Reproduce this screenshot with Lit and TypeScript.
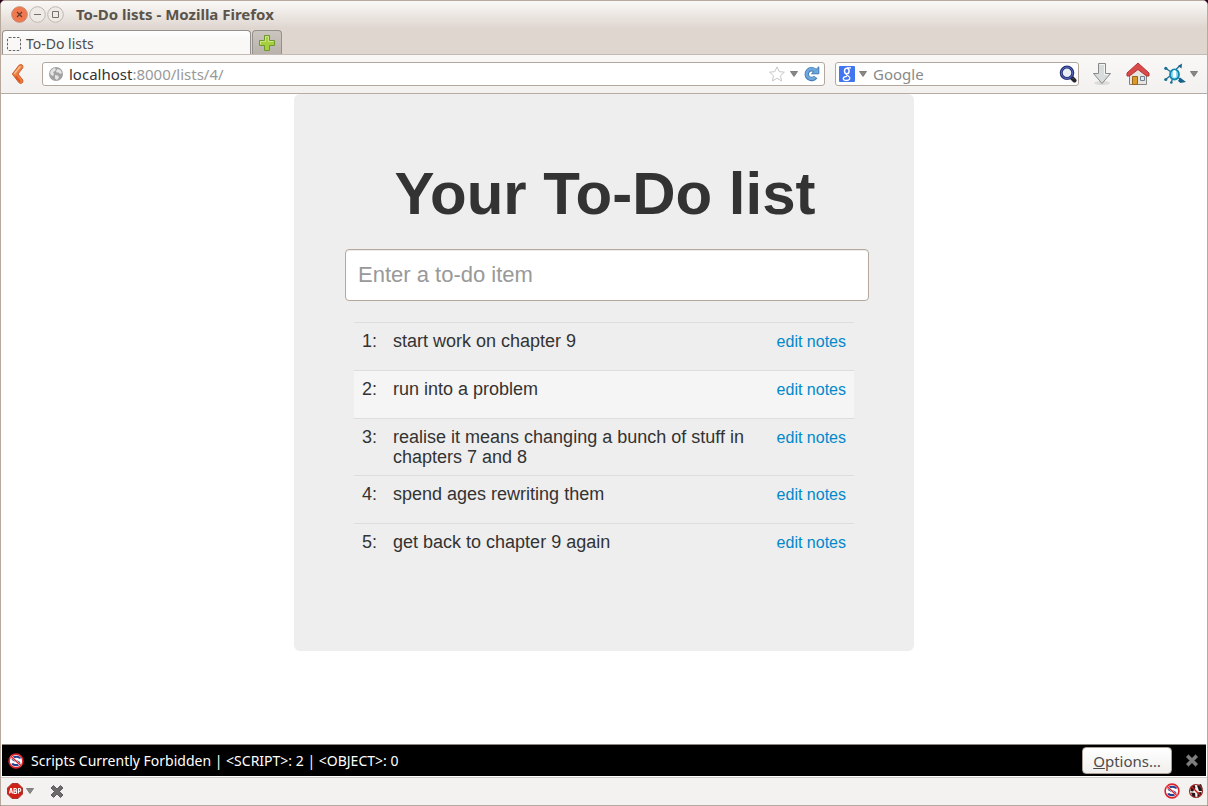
import { LitElement, html, css, svg } from "lit";
import { customElement, state } from "lit/decorators.js";

interface TodoItem {
  id: number;
  text: string;
}

const caret = html`<svg class="caret" width="8" height="6" viewBox="0 0 8 6" aria-hidden="true">
  <path d="M.5.5h7L4 5.5z" fill="#8a8885" stroke="#6f6d6a" stroke-width=".8" />
</svg>`;

const crossPath = svg`<path d="M3.500 1.500 7 5l3.500-3.500 2.500 2.500L9.500 7.500l3.500 3.500-2.500 2.500L7 10l-3.500 3.500L1 11l3.500-3.500L1 4z" />`;

const scriptBlocked = html`<svg width="16" height="16" viewBox="0 0 16 16" aria-hidden="true">
  <circle cx="8" cy="8" r="6.900" fill="#fff" stroke="#dd2229" stroke-width="1.600" />
  <path d="M12 5.600C11.500 3.200 4.600 3 4.600 5.800c0 2.500 6.800 1.800 6.800 4.500 0 2.500-6.400 2.300-7.200 0" fill="none" stroke="#27408e" stroke-width="2.100" />
  <path d="m3 3.200 10 9.600" stroke="#fff" stroke-width="2.200" />
  <path d="m3 3.200 10 9.600" stroke="#dd2229" stroke-width="1.400" />
</svg>`;

@customElement("todo-page")
class TodoPage extends LitElement {
  static styles = css`
    :host {
      display: block;
      font-family: "Liberation Sans", Arial, Helvetica, sans-serif;
      color: #333;
    }
    .hero {
      box-sizing: border-box;
      max-width: 620px;
      margin: 0 auto;
      padding: 60px 60px 79px;
      background: #eee;
      border-radius: 6px;
    }
    h1 {
      margin: 0 -40px;
      padding-left: 2px;
      font-size: 60px;
      line-height: 80px;
      font-weight: 700;
      text-align: center;
    }
    form {
      margin: 15px -15px 21px -9px;
    }
    .entry {
      box-sizing: border-box;
      display: block;
      width: 100%;
      height: 52px;
      padding: 0 12px;
      border: 1px solid #b5a99e;
      border-radius: 4px;
      background: #fff;
      box-shadow: inset 0 1px 1px rgba(0, 0, 0, 0.08);
      font: 22px "Liberation Sans", Arial, sans-serif;
      color: #555;
    }
    .entry::placeholder {
      color: #999;
      opacity: 1;
    }
    .list {
      width: 100%;
      border-collapse: collapse;
      font-size: 18px;
      line-height: 20px;
    }
    tr {
      height: 48px;
    }
    td {
      padding: 8px;
      border-top: 1px solid #ddd;
      vertical-align: top;
    }
    tr:nth-child(2) {
      background: #f5f5f5;
    }
    .number {
      width: 15px;
    }
    .action {
      width: 69px;
      text-align: right;
      white-space: nowrap;
      font-size: 16px;
      line-height: 22px;
    }
    a {
      color: #08c;
      text-decoration: none;
    }
    a:hover {
      text-decoration: underline;
    }
  `;

  @state() private items: TodoItem[] = [
    { id: 1, text: "start work on chapter 9" },
    { id: 2, text: "run into a problem" },
    { id: 3, text: "realise it means changing a bunch of stuff in chapters 7 and 8" },
    { id: 4, text: "spend ages rewriting them" },
    { id: 5, text: "get back to chapter 9 again" },
  ];

  private add(e: Event) {
    e.preventDefault();
    const box = this.renderRoot.querySelector("input")!;
    const text = box.value.trim();
    if (!text) return;
    this.items = [...this.items, { id: this.items.length + 1, text }];
    box.value = "";
  }

  render() {
    return html`<section class="hero">
      <h1>Your To-Do list</h1>
      <form @submit=${this.add}>
        <input class="entry" aria-label="Enter a to-do item" placeholder="Enter a to-do item" />
      </form>
      <table class="list">
        <tbody>
          ${this.items.map(
            (item) => html`<tr>
              <td class="number">${item.id}:</td>
              <td>${item.text}</td>
              <td class="action"><a href="#item-${item.id}">edit notes</a></td>
            </tr>`
          )}
        </tbody>
      </table>
    </section>`;
  }
}

@customElement("app-root")
class AppRoot extends LitElement {
  static styles = css`
    :host {
      display: block;
      font: 14px/20px "Noto Sans", "Open Sans", sans-serif;
      color: #4c4c4c;
      background: #2c001e;
    }
    .window {
      box-sizing: border-box;
      min-height: 100vh;
      display: flex;
      flex-direction: column;
      border: 1px solid #b7a99d;
      border-radius: 5px 5px 0 0;
      background: #fff;
      overflow: hidden;
    }
    svg {
      display: block;
      flex: none;
    }
    button {
      margin: 0;
      padding: 0;
      border: 0;
      background: none;
      font: inherit;
      color: inherit;
    }
    .frame {
      background: linear-gradient(#faf9f7, #dfd6d0 27px);
    }
    .title {
      box-sizing: border-box;
      display: flex;
      align-items: center;
      height: 28px;
      padding: 0 10px 2px;
    }
    .controls {
      display: flex;
      gap: 1px;
      margin-right: 12px;
    }
    .title-text {
      font-size: 15px;
      font-weight: 700;
      color: #5a544c;
    }
    .tabs {
      box-sizing: border-box;
      display: flex;
      align-items: flex-end;
      gap: 1px;
      height: 26px;
      padding: 0 1px;
      border-bottom: 1px solid #c3bab3;
    }
    .tab {
      box-sizing: border-box;
      display: flex;
      align-items: center;
      gap: 5px;
      width: 249px;
      height: 24px;
      padding: 2px 4px 0;
      border: 1px solid #94908d;
      border-bottom: 0;
      border-radius: 4px 4px 0 0;
      background: linear-gradient(#fff, #f9f8f7 8px);
      text-align: left;
    }
    .new-tab {
      box-sizing: border-box;
      width: 30px;
      height: 24px;
      display: grid;
      place-items: center;
      border: 1px solid #94908d;
      border-bottom: 0;
      border-radius: 4px 4px 0 0;
      background: linear-gradient(#cbc5c0, #b9b2ac);
    }
    .toolbar {
      box-sizing: border-box;
      display: flex;
      align-items: center;
      height: 39px;
      padding: 0 9px;
      background: linear-gradient(#f9f8f6, #f3f1f0);
      border-bottom: 1px solid #b5aca4;
    }
    .field {
      box-sizing: border-box;
      display: flex;
      align-items: center;
      height: 24px;
      border: 1px solid #b3a89d;
      border-radius: 3px;
      background: #fff;
      font-size: 15px;
    }
    .address {
      flex: 1;
      margin-left: 17px;
      padding: 0 4px 0 5px;
      gap: 5px;
    }
    .url {
      flex: 1;
      min-width: 0;
      color: #999;
      white-space: nowrap;
    }
    .host {
      color: #333;
    }
    .search {
      width: 244px;
      margin: 0 12px 0 10px;
      padding: 0 1px 0 3px;
      gap: 4px;
    }
    .query {
      flex: 1;
      min-width: 0;
      margin-left: 2px;
      padding: 0;
      border: 0;
      outline: 0;
      background: none;
      font: inherit;
      color: #333;
    }
    .query::placeholder {
      color: #8a8a8a;
      opacity: 1;
    }
    .tools {
      display: flex;
      align-items: center;
      gap: 12px;
    }
    .tool {
      display: flex;
      align-items: center;
      gap: 3px;
    }
    main {
      flex: 1;
    }
    .notice {
      box-sizing: border-box;
      display: flex;
      align-items: center;
      gap: 7px;
      height: 32px;
      margin: 0 1px;
      padding: 0 7px 0 6px;
      border-top: 1px solid #8c8680;
      background: #000;
      color: #fff;
    }
    .message {
      flex: 1;
    }
    .options {
      box-sizing: border-box;
      width: 90px;
      height: 27px;
      margin-right: 6px;
      border: 1px solid #a99f95;
      border-radius: 4px;
      background: linear-gradient(#fff, #f0efed);
      font-size: 15px;
      color: #4c4c4c;
    }
    .status {
      box-sizing: border-box;
      display: flex;
      align-items: center;
      gap: 8px;
      height: 28px;
      margin-top: 1px;
      padding: 0 3px 1px 6px;
      border-top: 1px solid #cfcac6;
      background: #f4f2f1;
    }
    .spacer {
      flex: 1;
    }
    .dismiss {
      margin-left: 8px;
    }
  `;

  render() {
    return html`<div class="window">
      <header class="frame">
        <div class="title">
          <div class="controls">
            <button aria-label="Close">
              <svg width="17" height="17" viewBox="0 0 17 17">
                <circle cx="8.500" cy="8.500" r="7.800" fill="#f0784f" stroke="#c9866c" />
                <path d="m6 6 5 5m0-5-5 5" stroke="#67392b" stroke-width="1.200" />
              </svg>
            </button>
            <button aria-label="Minimize">
              <svg width="17" height="17" viewBox="0 0 17 17">
                <circle cx="8.500" cy="8.500" r="7.800" fill="#eeeae6" stroke="#bfb7ae" />
                <path d="M5 8.500h7" stroke="#77716a" />
              </svg>
            </button>
            <button aria-label="Maximize">
              <svg width="17" height="17" viewBox="0 0 17 17">
                <circle cx="8.500" cy="8.500" r="7.800" fill="#eeeae6" stroke="#bfb7ae" />
                <path d="M5.500 5.500h6v6h-6z" fill="none" stroke="#77716a" />
              </svg>
            </button>
          </div>
          <span class="title-text">To-Do lists - Mozilla Firefox</span>
        </div>
        <div class="tabs">
          <button class="tab">
            <svg width="14" height="14" viewBox="0 0 14 14" aria-hidden="true">
              <rect x=".500" y=".500" width="13" height="13" rx="1.500" fill="none" stroke="#666" stroke-dasharray="2.500 1.500" />
            </svg>
            To-Do lists
          </button>
          <button class="new-tab" aria-label="Open a new tab">
            <svg width="16" height="16" viewBox="0 0 16 16">
              <path d="M5.500.500h5v5h5v5h-5v5h-5v-5h-5v-5h5z" fill="#a5cf3c" stroke="#6c9a2c" />
              <path d="M1.500 9.500v-3h5v-5h3v5h5" fill="none" stroke="#cfe58a" />
            </svg>
          </button>
        </div>
      </header>

      <nav class="toolbar">
        <button aria-label="Back">
          <svg width="15" height="20" viewBox="0 0 15 20">
            <path d="M9 1.200Q11.500-.300 12.800 1.500v2.300L8 10l4.800 6v2.300q-1.300 2-3.800.500L2.300 10z" fill="#ee7f45" stroke="#cc5f2c" stroke-linejoin="round" />
            <path d="M10.500 2.200 4.300 9.800" stroke="#f8bd8c" stroke-width="1.500" />
            <path d="m5.500 12 4.700 5.800" stroke="#e2521c" stroke-width="1.800" />
          </svg>
        </button>
        <div class="field address">
          <svg width="16" height="16" viewBox="0 0 16 16" aria-hidden="true">
            <circle cx="8" cy="8" r="7" fill="#a2a2a2" />
            <path d="M3 4.500 6 2l2 1-1 2-2 1 1 2-1 2-2-1-1-2zM9.500 3l3 1 1.500 3-2 1-2-2-1 1-1-2zM7 9l3 .500 1 2-2 2.500-2-1.500z" fill="#e5e5e5" />
          </svg>
          <span class="url"><span class="host">localhost</span>:8000/lists/4/</span>
          <svg width="16" height="16" viewBox="0 0 16 16" aria-hidden="true">
            <path d="m8 .900 2.200 4.700 5.200.600-3.900 3.500 1.100 5.200L8 12.300l-4.600 2.600 1.100-5.200L.600 6.200l5.200-.600z" fill="#fff" stroke="#c6c6c6" stroke-linejoin="round" />
          </svg>
          ${caret}
          <svg width="17" height="16" viewBox="0 0 17 16" aria-hidden="true">
            <path d="M11.800 4.400A4.900 4.900 0 1 0 12.600 11" fill="none" stroke="#3d78b5" stroke-width="4.400" />
            <path d="M15.800.800v7H8.500z" fill="#70a7da" stroke="#3d78b5" stroke-linejoin="round" />
            <path d="M12.400 4.800A4.900 4.900 0 1 0 12.200 11.200" fill="none" stroke="#70a7da" stroke-width="2.800" />
          </svg>
        </div>
        <div class="field search">
          <svg width="16" height="16" viewBox="0 0 16 16" aria-hidden="true">
            <rect width="16" height="16" rx="1" fill="#4275f0" />
            <ellipse cx="7.800" cy="5" rx="2.300" ry="2.800" fill="none" stroke="#fff" stroke-width="1.500" />
            <path d="M8 1.800h4M8 7.800c-2 1 .500 1.500 1.700 2.500 2.600 2.200.500 4.200-2.200 4.200-4.500 0-4.300-4 .500-4.100" fill="none" stroke="#fff" stroke-width="1.300" />
          </svg>
          ${caret}
          <input class="query" aria-label="Search with Google" placeholder="Google" />
          <svg width="18" height="18" viewBox="0 0 18 18" aria-hidden="true">
            <path d="m11.500 11.500 4 4" stroke="#26242c" stroke-width="4" stroke-linecap="round" />
            <circle cx="8" cy="7.800" r="5.800" fill="#e9edf5" stroke="#263073" stroke-width="3" />
            <circle cx="8" cy="7.800" r="5.700" fill="none" stroke="#5a6dc2" />
            <path d="m14 13.500 1.500 1.500" stroke="#82808a" stroke-dasharray="1 1" />
          </svg>
        </div>
        <div class="tools">
          <button class="tool" aria-label="Downloads">
            <svg width="22" height="24" viewBox="0 0 22 24">
              <ellipse cx="11" cy="21" rx="8" ry="2" fill="#dedcda" />
              <path d="M7.500 1.500h7v10h5L11 21.500l-8.500-10h5z" fill="#d8dcdc" stroke="#868a8b" stroke-linejoin="round" />
              <path d="M8.500 2.500h5v10h3.500" fill="none" stroke="#f3f4f4" />
            </svg>
          </button>
          <button class="tool" aria-label="Home">
            <svg width="26" height="24" viewBox="0 0 26 24">
              <path d="M4.500 11 13 4l8.500 7v11.500h-17z" fill="#e6e5e1" stroke="#85837e" />
              <path d="M7.500 14.500h5v8h-5z" fill="#d99a2b" stroke="#9a6517" />
              <path d="M15.500 14.500h4v4h-4z" fill="#dce7f0" stroke="#72808c" />
              <path d="M13 1 2 11v3h2.500L13 7.500l8.500 6.500H24v-3z" fill="#d94a4a" stroke="#b53535" stroke-linejoin="round" />
            </svg>
          </button>
          <button class="tool" aria-label="Extension menu">
            <svg width="24" height="22" viewBox="0 0 24 22">
              <path d="M8 9 3 5.500M7 13l-4.500 3.500M9.500 15.500 8.500 19m4-12 4.500-4.500m-2.500 12 4 2" fill="none" stroke="#216f8e" stroke-width="1.300" />
              <ellipse cx="11.500" cy="11.500" rx="4.400" ry="5" fill="#8fdcf2" stroke="#1487ad" stroke-width="2" />
              <path d="M11.500 8.500v4.500" stroke="#fff" stroke-width="3" stroke-linecap="round" />
              <path d="m15 3 4-2.500-.500 5zM17 14.500l6 4.500-5.500 1-2.500-2z" fill="#17638a" />
              <circle cx="2.800" cy="5.300" r="1.600" fill="#1d6f94" />
              <circle cx="2.800" cy="16.500" r="1.600" fill="#1d6f94" />
              <circle cx="8.300" cy="19.500" r="1.300" fill="#1d6f94" />
            </svg>
            ${caret}
          </button>
        </div>
      </nav>

      <main><todo-page></todo-page></main>

      <div class="notice">
        ${scriptBlocked}
        <span class="message">Scripts Currently Forbidden | &lt;SCRIPT&gt;: 2 | &lt;OBJECT&gt;: 0</span>
        <button class="options"><u>O</u>ptions…</button>
        <button aria-label="Dismiss">
          <svg width="14" height="15" viewBox="0 0 14 15" fill="#7d7d7d" stroke="#444" stroke-width=".800">${crossPath}</svg>
        </button>
      </div>
      <footer class="status">
        <button class="tool" aria-label="Adblock Plus">
          <svg width="16" height="16" viewBox="0 0 16 16">
            <path d="M5 .500h6L15.500 5v6L11 15.500H5L.500 11V5z" fill="#cf1f16" stroke="#a8362e" />
            <path
              d="M2.500 10.500 3.700 5.500h.600l1.200 5M3 9h2M7 5.500v5h1.500q1.200 0 1.200-1.300T8.500 8H7h1.300q1.200 0 1.200-1.200T8.300 5.500zM11.500 10.500v-5h1q1.300 0 1.300 1.400t-1.300 1.400h-1"
              fill="none" stroke="#fff" stroke-width="1.100"
            />
          </svg>
          ${caret}
        </button>
        <button class="dismiss" aria-label="Close the add-on bar">
          <svg width="14" height="15" viewBox="0 0 14 15" fill="#6b6b6b" stroke="#484848" stroke-width=".800">${crossPath}</svg>
        </button>
        <span class="spacer"></span>
        ${scriptBlocked}
        <svg width="16" height="16" viewBox="0 0 16 16" aria-hidden="true">
          <path d="M2.500 4 6.500 1.500 7.500 5 5 8.500 2.500 8zM9 2.500l4-1.500 1.500 4-.500 3L11 8zM3 9.500l4 .500.500 4.500-3-.500zM9.500 9.500l4-.500-.500 3.500-3.500 2.500z" fill="#231818" />
          <circle cx="8" cy="8" r="6.500" fill="none" stroke="#a32a2a" stroke-width="1.200" />
          <path d="m3.500 3.500 9 9" stroke="#c51f1f" stroke-width="1.500" />
        </svg>
      </footer>
    </div>`;
  }
}
